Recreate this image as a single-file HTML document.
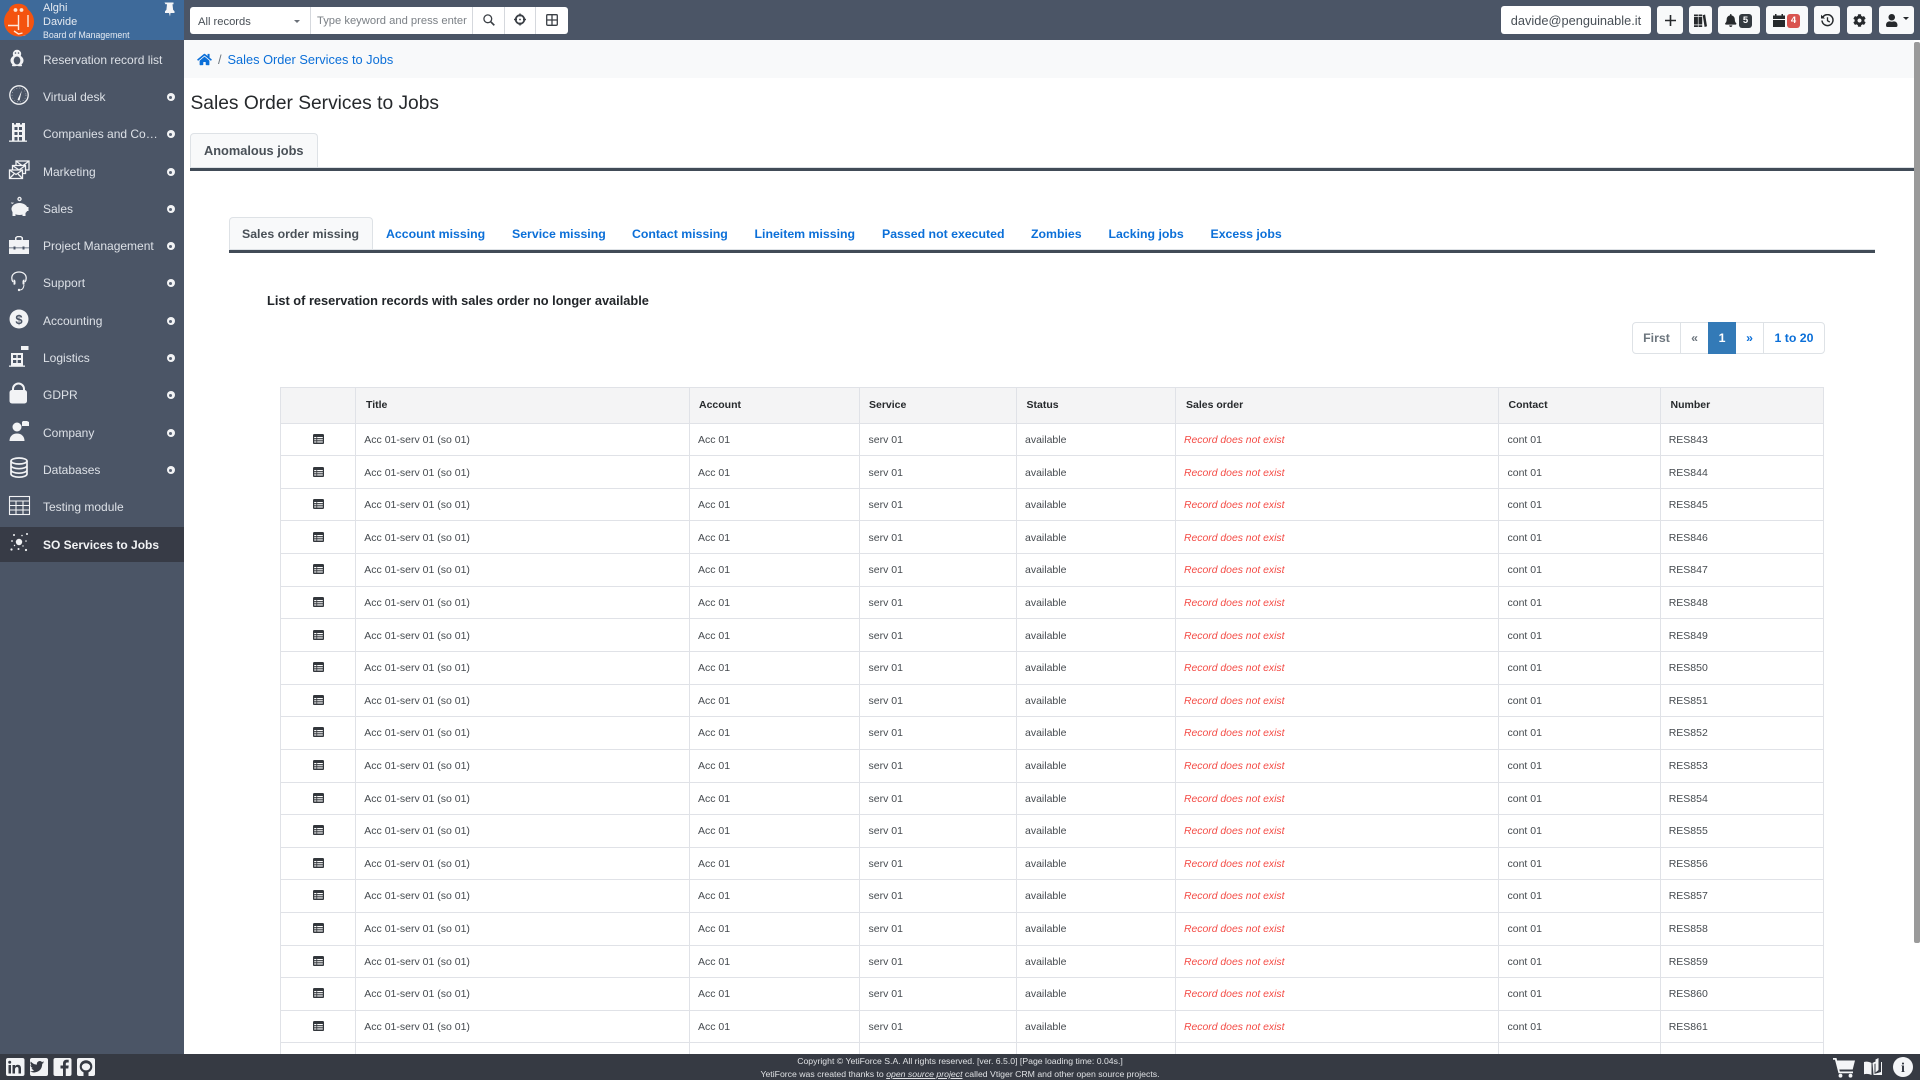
<!DOCTYPE html>
<html lang="en"><head><meta charset="utf-8"><title>Sales Order Services to Jobs</title>
<style>
*{box-sizing:border-box}
html,body{margin:0;padding:0;width:1920px;height:1080px;overflow:hidden;background:#fff;font-family:"Liberation Sans",sans-serif}
.a{position:absolute;white-space:nowrap}
.nav{left:43px;font-size:12px;color:#dde1e7;line-height:14px}
.dot{position:absolute;left:166.500px;width:8px;height:8px;border-radius:50%;background:#f2f3f5}
.dot:after{content:"";position:absolute;left:2.500px;top:2.500px;width:3px;height:3px;border-radius:50%;background:#5a6375}
.btn{position:absolute;top:6px;height:28px;background:#f8f9fa;border-radius:3px}
.btn svg{position:absolute}
.badge{position:absolute;top:8px;width:13px;height:14px;border-radius:3px;color:#fff;font-size:9.5px;font-weight:bold;line-height:14px;text-align:center}
.tab{font-size:12.320px;font-weight:bold;color:#0b6fd8;line-height:14px;top:227px}
.hd{position:absolute;top:387px;height:36px;line-height:37px;font-size:10.5px;font-weight:bold;color:#26292c}
.r{position:absolute;left:280px;width:1544px;height:33px;line-height:34.600px;font-size:10.5px;color:#454a4f}
.r span{position:absolute;white-space:nowrap}
.r span:nth-of-type(1){left:84.300px}
.r span:nth-of-type(2){left:418px}
.r span:nth-of-type(3){left:588.500px}
.r span:nth-of-type(4){left:745px}
.r span:nth-of-type(5){left:904px;top:1px;color:#f44b45;font-style:italic;font-size:10.4px}
.r span:nth-of-type(6){left:1227.500px}
.r span:nth-of-type(7){left:1388.700px}
.r svg{position:absolute;left:33px;top:11px}
.hl{position:absolute;left:280px;width:1544px;height:1px;background:#e0e2e7}
.vl{position:absolute;top:387px;height:667px;width:1px;background:#e0e2e7}
.pg{position:absolute;top:322px;height:32px;line-height:30px;font-size:12.320px;font-weight:bold;text-align:center;border:1px solid #dee2e6;background:#fff}
</style></head><body>

<!-- top bar -->
<div class="a" style="left:0;top:0;width:1920px;height:40px;background:#4b5566"></div>
<div class="a" style="left:0;top:0;width:184px;height:40px;background:#3e6a9a"></div>

<!-- sidebar -->
<div class="a" style="left:0;top:40px;width:184px;height:1014px;background:#4b5566"></div>
<div class="a" style="left:0;top:527px;width:184px;height:35px;background:#373b46"></div>

<!-- logo text -->
<div class="a" style="left:43px;top:2px;font-size:11px;line-height:12px;color:#e6ebf2">Alghi</div>
<div class="a" style="left:43px;top:15.500px;font-size:11px;line-height:12px;color:#e6ebf2">Davide</div>
<div class="a" style="left:43px;top:30px;font-size:8.750px;line-height:11px;color:#e6ebf2">Board of Management</div>

<svg class="a" style="left:0;top:0" width="184" height="580" viewBox="0 0 184 580">
  <!-- logo -->
  <g>
    <path d="M13 30l6 6.500 6.500-1-5-5z" fill="#fbe5d6"/>
    <circle cx="19" cy="21.500" r="15" fill="#f4530f"/>
    <ellipse cx="18.500" cy="10.500" rx="9.500" ry="6.800" fill="#f4530f"/>
    <circle cx="15.500" cy="10" r="1.900" fill="#fbe5d6"/><circle cx="21.500" cy="10" r="1.900" fill="#fbe5d6"/>
    <path d="M18.500 15V30M8 25.500H18.500M14 31l4.500 3 4-1M28 15v12" stroke="#fde9dc" stroke-width="1.400" fill="none"/>
  </g>
  <!-- pin -->
  <path d="M164.500 2.500h9v1.700h-1l.6 5.500 1.400 1.600V13h-4l-.5 3.500L169 13h-4v-1.700l1.400-1.600.6-5.500h-1.500z" fill="#f4f5f7"/>
  <g fill="#f2f3f5">
    <!-- penguin -->
    <circle cx="17" cy="54" r="4.200"/><ellipse cx="17" cy="60.500" rx="6.500" ry="5.500"/>
    <ellipse cx="17" cy="60.500" rx="3.300" ry="4" fill="#4b5566"/>
    <circle cx="15.500" cy="53" r=".8" fill="#4b5566"/><circle cx="18.500" cy="53" r=".8" fill="#4b5566"/>
    <rect x="12" y="64.500" width="4" height="1.800" rx=".8"/><rect x="18" y="64.500" width="4" height="1.800" rx=".8"/>
    <!-- gauge -->
    <circle cx="19" cy="95" r="9.200" fill="none" stroke="#f2f3f5" stroke-width="1.300"/>
    <circle cx="19" cy="95" r="7" fill="none" stroke="#f2f3f5" stroke-width=".5" stroke-dasharray="1 2"/>
    <path d="M17.600 99.500a1.300 1.300 0 0 0 2 .7L21.800 90.500z"/>
    <!-- building -->
    <path d="M12 123h2v1.500h2V123h4v1.500h2V123h3v18H12z"/><rect x="9" y="140.500" width="18" height="1.300"/>
    <g fill="#4b5566"><rect x="14.500" y="127" width="3" height="3"/><rect x="19" y="127" width="3" height="3"/><rect x="14.500" y="132" width="3" height="3"/><rect x="19" y="132" width="3" height="3"/><rect x="14.500" y="137" width="3" height="3.500"/><rect x="19" y="137" width="3" height="3.500"/></g>
    <!-- marketing -->
    <g fill="#4b5566" stroke="#f2f3f5" stroke-width="1.300">
      <path d="M16 161h13v9H16z"/><path d="M16 161l6.500 5 6.500-5" fill="none"/>
      <path d="M12.500 165.500h13v8h-13z"/><path d="M12.500 165.500l6.500 4.500 6.500-4.500" fill="none"/>
      <path d="M9.500 170h13v8.500h-13z"/><path d="M9.500 170l6.500 4.500 6.500-4.500M9.500 178.500l4.500-4.500M22.500 178.500l-4.500-4.500" fill="none"/>
    </g>
    <!-- piggy -->
    <ellipse cx="19.500" cy="209" rx="8" ry="6"/>
    <circle cx="19.500" cy="199" r="2.200"/><circle cx="19.500" cy="199" r=".9" fill="#4b5566"/>
    <path d="M12 204l-1.200-1.500 3.500.3zM12.500 212l3 0 0 4h-3zM22.500 212h3v4h-3zM26 207h2.500v4H26z"/>
    <!-- briefcase -->
    <path d="M9 240h20v7.500H9zM9 248.300h20v5.700H9z"/><path d="M15 240v-2.500l2-1.500h4l2 1.500V240h-1.500v-2l-1-.7h-3l-1 .7v2z"/>
    <rect x="13.500" y="246.500" width="2" height="3" fill="#4b5566"/><rect x="22.500" y="246.500" width="2" height="3" fill="#4b5566"/>
    <!-- support -->
    <path d="M13 282c-.8-1-1.200-2.500-1.200-4 0-3.500 3-6 7.200-6s7.200 2.500 7.200 6c0 1.500-.4 3-1.200 4" fill="none" stroke="#f2f3f5" stroke-width="1.300"/>
    <path d="M13.500 279.500c1.300 0 2 1 2 2v2c0 1-.7 1.500-2 1zM24.500 279.500c-1.300 0-2 1-2 2v2c0 1 .7 1.500 2 1z"/>
    <path d="M24 285c-.5 3.500-2 5-4 5" fill="none" stroke="#f2f3f5" stroke-width="1"/><circle cx="19" cy="290" r="1.200"/>
    <!-- accounting -->
    <circle cx="19" cy="319" r="9.500"/>
    <text x="19" y="323.800" text-anchor="middle" font-size="13" font-weight="bold" fill="#4b5566" font-family="Liberation Sans">$</text>
    <!-- logistics -->
    <path d="M11 353h12v13H11z"/><rect x="9" y="365.500" width="16" height="1.300"/>
    <g fill="#4b5566"><rect x="13" y="355" width="3.300" height="3"/><rect x="17.700" y="355" width="3.300" height="3"/><rect x="13" y="360" width="3.300" height="3"/><rect x="17.700" y="360" width="3.300" height="3"/></g>
    <path d="M21 346h7.500v4H21z"/>
    <!-- lock -->
    <path d="M13 392v-3a5.500 5.500 0 0 1 11 0v3" fill="none" stroke="#f2f3f5" stroke-width="2"/>
    <rect x="9.500" y="390" width="17.500" height="13.500" rx="2.500"/>
    <!-- company -->
    <circle cx="17" cy="427" r="4.500"/><path d="M9.500 441c0-4.500 3-7.500 7.500-7.500s7.500 3 7.500 7.500z"/>
    <path d="M22 424v-2l1-1h4l2 1v4h-7z"/>
    <!-- db -->
    <g fill="none" stroke="#f2f3f5" stroke-width="1.700">
      <ellipse cx="19" cy="461" rx="8" ry="3"/><path d="M11 461v13c0 1.700 3.600 3.200 8 3.200s8-1.500 8-3.200v-13M11 465.500c0 1.700 3.600 3.200 8 3.200s8-1.500 8-3.200M11 470c0 1.700 3.600 3.200 8 3.200s8-1.500 8-3.200"/>
    </g>
    <!-- table -->
    <g fill="none" stroke="#f2f3f5" stroke-width="1.100"><rect x="9.500" y="496.500" width="20" height="18"/><path d="M9.500 501h20M9.500 505.500h20M9.500 510h20M16 501v13.500M23 501v13.500"/></g>
    <!-- SO -->
    <circle cx="19" cy="542" r="3.200"/>
    <circle cx="14" cy="535" r="1"/><circle cx="22" cy="535.500" r=".8"/><circle cx="27" cy="534" r="1"/><circle cx="12" cy="541" r=".9"/><circle cx="26" cy="541" r=".8"/><circle cx="11.500" cy="549.500" r="1.100"/><circle cx="18.500" cy="549" r="1"/><circle cx="26" cy="550" r="1.100"/><circle cx="23" cy="546" r=".7"/><circle cx="14.500" cy="545.500" r=".7"/>
  </g>
</svg>

<div class="a nav" style="top:53px">Reservation record list</div>
<div class="a nav" style="top:90px">Virtual desk</div><i class="dot" style="top:93px"></i>
<div class="a nav" style="top:127px">Companies and Co…</div><i class="dot" style="top:130px"></i>
<div class="a nav" style="top:165px">Marketing</div><i class="dot" style="top:168px"></i>
<div class="a nav" style="top:202px">Sales</div><i class="dot" style="top:205px"></i>
<div class="a nav" style="top:239px">Project Management</div><i class="dot" style="top:242px"></i>
<div class="a nav" style="top:276px">Support</div><i class="dot" style="top:279px"></i>
<div class="a nav" style="top:314px">Accounting</div><i class="dot" style="top:317px"></i>
<div class="a nav" style="top:351px">Logistics</div><i class="dot" style="top:354px"></i>
<div class="a nav" style="top:388px">GDPR</div><i class="dot" style="top:391px"></i>
<div class="a nav" style="top:426px">Company</div><i class="dot" style="top:429px"></i>
<div class="a nav" style="top:463px">Databases</div><i class="dot" style="top:466px"></i>
<div class="a nav" style="top:500px">Testing module</div>
<div class="a nav" style="top:538px;font-weight:bold;color:#f2f3f5">SO Services to Jobs</div>

<!-- search group -->
<div class="a" style="left:190px;top:7px;width:378px;height:27px;background:#fff;border-radius:3px"></div>
<div class="a" style="left:198px;top:14.500px;font-size:11.200px;line-height:14px;color:#495057">All records</div>
<div class="a" style="left:294px;top:20px;width:0;height:0;border:3.500px solid transparent;border-top:3.500px solid #6a7078"></div>
<div class="a" style="left:310px;top:7px;width:1px;height:27px;background:#d5d8dd"></div>
<div class="a" style="left:317px;top:13.500px;width:150px;overflow:hidden;font-size:11.200px;line-height:14px;color:#7b8086">Type keyword and press enter</div>
<div class="a" style="left:472px;top:7px;width:1px;height:27px;background:#d5d8dd"></div>
<div class="a" style="left:504px;top:7px;width:1px;height:27px;background:#d5d8dd"></div>
<div class="a" style="left:535px;top:7px;width:1px;height:27px;background:#d5d8dd"></div>
<svg class="a" style="left:482.500px;top:14px" width="12" height="12" viewBox="0 0 12 12"><circle cx="4.800" cy="4.800" r="3.900" fill="none" stroke="#3a3f45" stroke-width="1.300"/><path d="M7.800 7.800l3.500 3.500" stroke="#3a3f45" stroke-width="1.700"/></svg>
<svg class="a" style="left:514px;top:13px" width="12" height="13" viewBox="0 0 12 13"><circle cx="6" cy="6.500" r="4.300" fill="none" stroke="#3a3f45" stroke-width="1.800"/><path d="M6 .5v3M6 9.500v3M0 6.500h3M9 6.500h3" stroke="#3a3f45" stroke-width="1.400"/><circle cx="6" cy="6.500" r=".9" fill="#3a3f45"/></svg>
<svg class="a" style="left:546px;top:14px" width="12" height="12" viewBox="0 0 12 12"><rect x=".7" y=".7" width="10.600" height="10.600" rx="1" fill="none" stroke="#3a3f45" stroke-width="1.300"/><path d="M6 1v10M1 6h10" stroke="#3a3f45" stroke-width="1.300"/></svg>

<!-- right buttons -->
<div class="btn" style="left:1501px;width:150px;background:#fff;font-size:12.800px;line-height:29px;color:#495057;text-align:center">davide@penguinable.it</div>
<div class="btn" style="left:1657px;width:26px"><svg style="left:7.500px;top:8.500px" width="11" height="11" viewBox="0 0 11 11"><path d="M4.700 0h1.600v4.700H11v1.600H6.300V11H4.700V6.300H0V4.700h4.700z" fill="#26292c"/></svg></div>
<div class="btn" style="left:1689px;width:23px"><svg style="left:5px;top:7.500px" width="13" height="13" viewBox="0 0 13 13"><path d="M0 .5h3.900V2.300H0zM0 3h3.900v7.500H0zM0 11.200h3.900V13H0zM4.500 .5h3.700V2.300H4.500zM4.500 3h3.700v7.500H4.500zM4.500 11.200h3.700V13H4.500zM8.700 1.200l2.400-.7L13 12.300l-2.400.7z" fill="#26292c"/></svg></div>
<div class="btn" style="left:1718px;width:42px"><svg style="left:7px;top:8px" width="11.500" height="13" viewBox="0 0 448 512"><path fill="#26292c" d="M224 512c35.320 0 63.970-28.650 63.970-64H160.030c0 35.350 28.650 64 63.970 64zm215.390-149.710c-19.320-20.760-55.470-51.990-55.470-154.290 0-77.700-54.480-139.900-127.940-155.160V32c0-17.670-14.320-32-31.980-32s-31.980 14.330-31.980 32v20.840C118.560 68.100 64.080 130.300 64.080 208c0 102.300-36.150 133.530-55.470 154.290-6 6.450-8.660 14.160-8.610 21.710.11 16.400 12.980 32 32.100 32h383.800c19.120 0 32-15.600 32.100-32 .05-7.550-2.610-15.270-8.610-21.710z"/></svg><span class="badge" style="left:21px;background:#343a40">5</span></div>
<div class="btn" style="left:1766px;width:42px"><svg style="left:7px;top:8px" width="12" height="13" viewBox="0 0 12 13"><path d="M2 0h1.500v1.500h5V0H10v1.500h2V5H0V1.500h2zM0 6h12v7H0z" fill="#26292c"/></svg><span class="badge" style="left:21px;background:#d9534f">4</span></div>
<div class="btn" style="left:1814px;width:26px"><svg style="left:7px;top:8px" width="13" height="13" viewBox="0 0 13 13"><path d="M1.800 3.200A5.500 5.500 0 1 1 1 6.500" fill="none" stroke="#26292c" stroke-width="1.500"/><path d="M0 .8L4 4.500H0z" fill="#26292c"/><path d="M6.500 3.300v3.400l2.300 1.400" fill="none" stroke="#26292c" stroke-width="1.300"/></svg></div>
<div class="btn" style="left:1847px;width:25px"><svg style="left:6px;top:8px" width="13" height="13" viewBox="0 0 512 512"><path fill="#26292c" d="M487.400 315.700l-42.600-24.600c4.300-23.200 4.300-47 0-70.200l42.600-24.600c4.900-2.800 7.100-8.600 5.500-14-11.100-35.600-30-67.800-54.700-94.600-3.800-4.100-10-5.100-14.800-2.300L380.800 110c-17.900-15.400-38.500-27.300-60.800-35.100V25.800c0-5.600-3.900-10.500-9.400-11.700-36.700-8.200-74.300-7.800-109.200 0-5.500 1.200-9.400 6.100-9.400 11.700V75c-22.200 7.900-42.800 19.800-60.800 35.100L88.700 85.500c-4.900-2.800-11-1.900-14.800 2.300-24.700 26.700-43.600 58.900-54.700 94.600-1.700 5.400.6 11.200 5.500 14L67.300 221c-4.300 23.200-4.300 47 0 70.200l-42.600 24.600c-4.900 2.800-7.100 8.600-5.500 14 11.100 35.600 30 67.800 54.700 94.600 3.800 4.100 10 5.100 14.800 2.300l42.600-24.600c17.900 15.400 38.500 27.300 60.800 35.100v49.200c0 5.600 3.900 10.500 9.400 11.700 36.700 8.200 74.300 7.800 109.200 0 5.500-1.200 9.400-6.100 9.400-11.700v-49.200c22.200-7.900 42.800-19.800 60.800-35.100l42.600 24.600c4.900 2.800 11 1.900 14.800-2.300 24.700-26.700 43.600-58.900 54.700-94.600 1.500-5.500-.7-11.300-5.600-14.100zM256 336c-44.100 0-80-35.900-80-80s35.900-80 80-80 80 35.900 80 80-35.900 80-80 80z"/></svg></div>
<div class="btn" style="left:1879px;width:35px"><svg style="left:7px;top:8px" width="11.500" height="13" viewBox="0 0 448 512"><path fill="#26292c" d="M224 256c70.700 0 128-57.300 128-128S294.700 0 224 0 96 57.300 96 128s57.300 128 128 128zm89.600 32h-16.700c-22.200 10.200-46.900 16-72.900 16s-50.600-5.800-72.900-16h-16.700C60.200 288 0 348.200 0 422.400V464c0 26.500 21.500 48 48 48h352c26.500 0 48-21.500 48-48v-41.600c0-74.200-60.200-134.400-134.400-134.400z"/></svg><span class="a" style="left:24px;top:11px;width:0;height:0;border:3px solid transparent;border-top:3px solid #26292c"></span></div>

<!-- breadcrumb -->
<div class="a" style="left:184px;top:40px;width:1730px;height:38px;background:#f8f9fa"></div>
<svg class="a" style="left:197px;top:53px" width="15" height="13" viewBox="0 0 576 512"><path fill="#0b6fd8" d="M280.370 148.260L96 300.110V464a16 16 0 0 0 16 16l112.060-.29a16 16 0 0 0 15.920-16V368a16 16 0 0 1 16-16h64a16 16 0 0 1 16 16v95.640a16 16 0 0 0 16 16.050L464 480a16 16 0 0 0 16-16V300L295.670 148.260a12.190 12.190 0 0 0-15.300 0zM571.600 251.470L488 182.560V44.050a12 12 0 0 0-12-12h-56a12 12 0 0 0-12 12v72.610L318.470 43a48 48 0 0 0-61 0L4.340 251.470a12 12 0 0 0-1.600 16.900l25.500 31A12 12 0 0 0 45.150 301l235.220-193.740a12.190 12.190 0 0 1 15.300 0L530.900 301a12 12 0 0 0 16.900-1.600l25.500-31a12 12 0 0 0-1.700-16.930z"/></svg>
<div class="a" style="left:218px;top:52px;font-size:12.800px;line-height:16px;color:#6c757d">/</div>
<div class="a" style="left:227.500px;top:52px;font-size:12.800px;line-height:16px;color:#0b6fd8">Sales Order Services to Jobs</div>

<div class="a" style="left:190.500px;top:91px;font-size:19.200px;line-height:25px;color:#26292c">Sales Order Services to Jobs</div>

<!-- main tabs -->
<div class="a" style="left:190px;top:133px;width:128px;height:35px;background:#f8f9fa;border:1px solid #dee2e6;border-bottom:0;border-radius:4px 4px 0 0"></div>
<div class="a" style="left:204px;top:144px;font-size:12.800px;font-weight:bold;line-height:14px;color:#495057">Anomalous jobs</div>
<div class="a" style="left:190px;top:167px;width:1724px;height:1px;background:#dee2e6"></div>
<div class="a" style="left:190px;top:168px;width:1724px;height:3px;background:#414b57"></div>

<!-- sub tabs -->
<div class="a" style="left:229px;top:217px;width:144px;height:33px;background:#f8f9fa;border:1px solid #dee2e6;border-bottom:0;border-radius:4px 4px 0 0"></div>
<div class="a tab" style="left:242px;color:#495057">Sales order missing</div>
<div class="a tab" style="left:386px">Account missing</div>
<div class="a tab" style="left:512px">Service missing</div>
<div class="a tab" style="left:632px">Contact missing</div>
<div class="a tab" style="left:754.500px">Lineitem missing</div>
<div class="a tab" style="left:882px">Passed not executed</div>
<div class="a tab" style="left:1031px">Zombies</div>
<div class="a tab" style="left:1108.500px">Lacking jobs</div>
<div class="a tab" style="left:1210.500px">Excess jobs</div>
<div class="a" style="left:229px;top:249px;width:1646px;height:1px;background:#dee2e6"></div>
<div class="a" style="left:229px;top:250px;width:1646px;height:3px;background:#414b57"></div>

<div class="a" style="left:267px;top:293px;font-size:12.800px;font-weight:bold;line-height:15px;color:#212529">List of reservation records with sales order no longer available</div>

<!-- pagination -->
<div class="pg" style="left:1632px;width:49px;color:#6c757d;border-radius:4px 0 0 4px">First</div>
<div class="pg" style="left:1681px;width:28px;color:#6c757d;border-left:0">«</div>
<div class="pg" style="left:1708px;width:28px;background:#337ab7;border-color:#337ab7;color:#fff">1</div>
<div class="pg" style="left:1736px;width:28px;color:#0b6fd8;border-left:0">»</div>
<div class="pg" style="left:1763px;width:62px;color:#0b6fd8;border-radius:0 4px 4px 0">1 to 20</div>

<!-- table -->
<div class="a" style="left:280px;top:387px;width:1544px;height:36px;background:#f4f4f5"></div>
<div class="hl" style="top:387px"></div><div class="hl" style="top:423px"></div>
<div class="hd" style="left:366px">Title</div>
<div class="hd" style="left:699px">Account</div>
<div class="hd" style="left:869px">Service</div>
<div class="hd" style="left:1026.500px">Status</div>
<div class="hd" style="left:1186px">Sales order</div>
<div class="hd" style="left:1508.500px">Contact</div>
<div class="hd" style="left:1670.500px">Number</div>

<svg width="0" height="0" style="position:absolute"><defs><g id="t"><rect width="11" height="10" rx="1.300" fill="#33373c"/><path d="M1.200 3h8.600v1.100H1.200zM1.200 5.200h8.600v1.100H1.200zM1.200 7.400h8.600v1.100H1.200z" fill="#fff"/><path d="M3.400 2.800h.8v6h-.8z" fill="#33373c"/></g></defs></svg>

<div class="r" style="top:423px"><svg width="11" height="10"><use href="#t"/></svg><span>Acc 01-serv 01 (so 01)</span><span>Acc 01</span><span>serv 01</span><span>available</span><span>Record does not exist</span><span>cont 01</span><span>RES843</span></div>
<div class="r" style="top:455.600px"><svg width="11" height="10"><use href="#t"/></svg><span>Acc 01-serv 01 (so 01)</span><span>Acc 01</span><span>serv 01</span><span>available</span><span>Record does not exist</span><span>cont 01</span><span>RES844</span></div>
<div class="r" style="top:488.200px"><svg width="11" height="10"><use href="#t"/></svg><span>Acc 01-serv 01 (so 01)</span><span>Acc 01</span><span>serv 01</span><span>available</span><span>Record does not exist</span><span>cont 01</span><span>RES845</span></div>
<div class="r" style="top:520.800px"><svg width="11" height="10"><use href="#t"/></svg><span>Acc 01-serv 01 (so 01)</span><span>Acc 01</span><span>serv 01</span><span>available</span><span>Record does not exist</span><span>cont 01</span><span>RES846</span></div>
<div class="r" style="top:553.400px"><svg width="11" height="10"><use href="#t"/></svg><span>Acc 01-serv 01 (so 01)</span><span>Acc 01</span><span>serv 01</span><span>available</span><span>Record does not exist</span><span>cont 01</span><span>RES847</span></div>
<div class="r" style="top:586px"><svg width="11" height="10"><use href="#t"/></svg><span>Acc 01-serv 01 (so 01)</span><span>Acc 01</span><span>serv 01</span><span>available</span><span>Record does not exist</span><span>cont 01</span><span>RES848</span></div>
<div class="r" style="top:618.600px"><svg width="11" height="10"><use href="#t"/></svg><span>Acc 01-serv 01 (so 01)</span><span>Acc 01</span><span>serv 01</span><span>available</span><span>Record does not exist</span><span>cont 01</span><span>RES849</span></div>
<div class="r" style="top:651.200px"><svg width="11" height="10"><use href="#t"/></svg><span>Acc 01-serv 01 (so 01)</span><span>Acc 01</span><span>serv 01</span><span>available</span><span>Record does not exist</span><span>cont 01</span><span>RES850</span></div>
<div class="r" style="top:683.800px"><svg width="11" height="10"><use href="#t"/></svg><span>Acc 01-serv 01 (so 01)</span><span>Acc 01</span><span>serv 01</span><span>available</span><span>Record does not exist</span><span>cont 01</span><span>RES851</span></div>
<div class="r" style="top:716.400px"><svg width="11" height="10"><use href="#t"/></svg><span>Acc 01-serv 01 (so 01)</span><span>Acc 01</span><span>serv 01</span><span>available</span><span>Record does not exist</span><span>cont 01</span><span>RES852</span></div>
<div class="r" style="top:749px"><svg width="11" height="10"><use href="#t"/></svg><span>Acc 01-serv 01 (so 01)</span><span>Acc 01</span><span>serv 01</span><span>available</span><span>Record does not exist</span><span>cont 01</span><span>RES853</span></div>
<div class="r" style="top:781.600px"><svg width="11" height="10"><use href="#t"/></svg><span>Acc 01-serv 01 (so 01)</span><span>Acc 01</span><span>serv 01</span><span>available</span><span>Record does not exist</span><span>cont 01</span><span>RES854</span></div>
<div class="r" style="top:814.200px"><svg width="11" height="10"><use href="#t"/></svg><span>Acc 01-serv 01 (so 01)</span><span>Acc 01</span><span>serv 01</span><span>available</span><span>Record does not exist</span><span>cont 01</span><span>RES855</span></div>
<div class="r" style="top:846.800px"><svg width="11" height="10"><use href="#t"/></svg><span>Acc 01-serv 01 (so 01)</span><span>Acc 01</span><span>serv 01</span><span>available</span><span>Record does not exist</span><span>cont 01</span><span>RES856</span></div>
<div class="r" style="top:879.400px"><svg width="11" height="10"><use href="#t"/></svg><span>Acc 01-serv 01 (so 01)</span><span>Acc 01</span><span>serv 01</span><span>available</span><span>Record does not exist</span><span>cont 01</span><span>RES857</span></div>
<div class="r" style="top:912px"><svg width="11" height="10"><use href="#t"/></svg><span>Acc 01-serv 01 (so 01)</span><span>Acc 01</span><span>serv 01</span><span>available</span><span>Record does not exist</span><span>cont 01</span><span>RES858</span></div>
<div class="r" style="top:944.600px"><svg width="11" height="10"><use href="#t"/></svg><span>Acc 01-serv 01 (so 01)</span><span>Acc 01</span><span>serv 01</span><span>available</span><span>Record does not exist</span><span>cont 01</span><span>RES859</span></div>
<div class="r" style="top:977.200px"><svg width="11" height="10"><use href="#t"/></svg><span>Acc 01-serv 01 (so 01)</span><span>Acc 01</span><span>serv 01</span><span>available</span><span>Record does not exist</span><span>cont 01</span><span>RES860</span></div>
<div class="r" style="top:1009.800px"><svg width="11" height="10"><use href="#t"/></svg><span>Acc 01-serv 01 (so 01)</span><span>Acc 01</span><span>serv 01</span><span>available</span><span>Record does not exist</span><span>cont 01</span><span>RES861</span></div>

<div class="hl" style="top:455px"></div><div class="hl" style="top:488px"></div><div class="hl" style="top:520px"></div><div class="hl" style="top:553px"></div><div class="hl" style="top:586px"></div><div class="hl" style="top:618px"></div><div class="hl" style="top:651px"></div><div class="hl" style="top:684px"></div><div class="hl" style="top:716px"></div><div class="hl" style="top:749px"></div><div class="hl" style="top:782px"></div><div class="hl" style="top:814px"></div><div class="hl" style="top:847px"></div><div class="hl" style="top:879px"></div><div class="hl" style="top:912px"></div><div class="hl" style="top:945px"></div><div class="hl" style="top:977px"></div><div class="hl" style="top:1010px"></div><div class="hl" style="top:1042px"></div>
<div class="vl" style="left:280px"></div><div class="vl" style="left:355px"></div><div class="vl" style="left:689px"></div><div class="vl" style="left:859px"></div><div class="vl" style="left:1016px"></div><div class="vl" style="left:1175px"></div><div class="vl" style="left:1498px"></div><div class="vl" style="left:1660px"></div><div class="vl" style="left:1823px"></div>

<!-- scrollbar -->
<div class="a" style="left:1914px;top:40px;width:6px;height:1014px;background:#fff"></div>
<div class="a" style="left:1914px;top:42px;width:6px;height:901px;background:#9a9a9a;border-radius:2px"></div>

<!-- footer -->
<div class="a" style="left:0;top:1054px;width:1920px;height:26px;background:#363a43"></div>
<div class="a" style="left:0;top:1055px;width:1920px;text-align:center;font-size:8.700px;line-height:12px;color:#dfe1e4">Copyright © YetiForce S.A. All rights reserved. [ver. 6.5.0] [Page loading time: 0.04s.]</div>
<div class="a" style="left:0;top:1068px;width:1920px;text-align:center;font-size:8.700px;line-height:12px;color:#dfe1e4">YetiForce was created thanks to <u><i>open source project</i></u> called Vtiger CRM and other open source projects.</div>

<svg class="a" style="left:0;top:1054px" width="110" height="26" viewBox="0 0 110 26">
  <rect x="6" y="4" width="18.500" height="18" rx="2" fill="#f2f3f5"/>
  <path d="M8.500 11h2.500v8.500H8.500zM12.500 11H15v1.200c.6-.9 1.600-1.400 2.700-1.400 2.300 0 3.300 1.500 3.300 3.800v4.900h-2.500V15c0-1.200-.5-2-1.500-2s-2 .8-2 2.200v4.300h-2.500z" fill="#363a43"/><circle cx="9.700" cy="8.300" r="1.500" fill="#363a43"/>
  <rect x="30" y="4" width="18" height="18" rx="2" fill="#f2f3f5"/>
  <path d="M45 8.500c-.6.300-1.200.4-1.800.5.700-.4 1.200-1 1.400-1.700-.6.400-1.300.6-2 .8a3.100 3.100 0 0 0-5.300 2.800c-2.600-.1-4.900-1.400-6.400-3.300-.8 1.400-.4 3.200 1 4.100-.5 0-1-.1-1.400-.4 0 1.500 1 2.800 2.500 3.100-.5.100-.9.100-1.400.1.400 1.200 1.500 2.100 2.900 2.100a6.200 6.200 0 0 1-4.600 1.300c4.200 2.700 12.800 1.200 13-7.900.8-.4 1.500-1 2.100-1.500z" transform="translate(1.500 .3) scale(.95)" fill="#363a43"/>
  <rect x="53.500" y="4" width="18" height="18" rx="2" fill="#f2f3f5"/>
  <path d="M63 22v-7.500h-2.500v-3H63V9.500c0-2.600 1.500-3.800 3.700-3.800l2 .1v2.700h-1.500c-1.100 0-1.400.6-1.400 1.400v1.600h2.900l-.4 3h-2.500V22z" fill="#363a43"/>
  <rect x="77" y="4" width="18" height="18" rx="2" fill="#f2f3f5"/>
  <circle cx="86" cy="12.500" r="6.300" fill="#363a43"/><path d="M83.500 22v-4h5v4z" fill="#363a43"/><path d="M81.800 8l2 1.300h4.400l2-1.300.5 2.500-1 5H82.300l-1-5z" fill="#363a43"/><ellipse cx="86" cy="12.800" rx="4.200" ry="3.600" fill="#f2f3f5"/>
</svg>
<svg class="a" style="left:1830px;top:1054px" width="90" height="26" viewBox="0 0 90 26">
  <path d="M3 4h3.500l.6 2.500H25l-2.300 9H9.300l.5 2H23v1.800H8.500L5 5.800H3z" fill="#f4f5f7"/><circle cx="10.500" cy="21.700" r="1.900" fill="#f4f5f7"/><circle cx="20.500" cy="21.700" r="1.900" fill="#f4f5f7"/>
  <path d="M34 8c2.500-.6 5-.4 7.500 1v12c-2.500-1.200-5-1.400-7.500-.8zM42.500 9c1-.7 2-1.100 3-1.400V5.500l3-1.500v12l-3 2.500v-9l-1 .5v9.900l6.500-1.900V8h1v13h-8.500z" fill="#f4f5f7"/>
  <circle cx="73" cy="13" r="10" fill="#f4f5f7"/><text x="73" y="18" text-anchor="middle" font-size="14" font-weight="bold" font-family="Liberation Serif" fill="#363a43">i</text>
</svg>
</body></html>
